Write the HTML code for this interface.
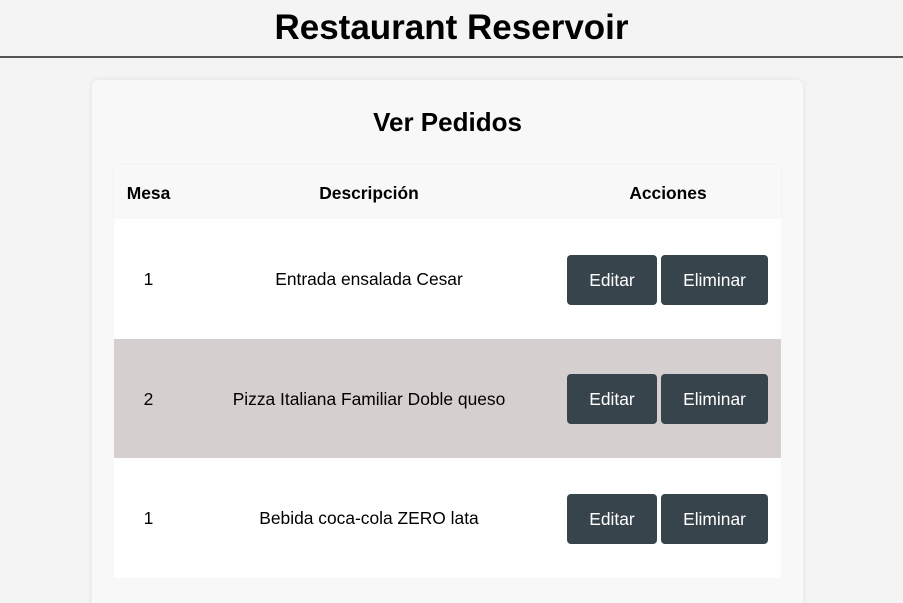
<!DOCTYPE html>
<html><head><meta charset="utf-8"><style>
*{box-sizing:border-box;margin:0;padding:0}
html,body{width:903px;height:603px;overflow:hidden;background:#f4f4f4;font-family:"Liberation Sans",Arial,sans-serif;color:#000}
body{position:relative}
.hdr{height:58px;border-bottom:2px solid #555;text-align:center;font-weight:bold;font-size:35px;line-height:56px}
.card{position:absolute;left:92px;top:80px;width:711px;height:530px;background:#f8f8f8;border-radius:6px;box-shadow:0 0 6px rgba(0,0,0,.08)}
h2{text-align:center;font-size:26px;font-weight:bold;position:absolute;top:27px;width:100%}
.t{position:absolute;left:22px;top:85px;width:667px}
.r{display:flex;align-items:center;font-size:17.4px}
.h{height:54px;background:#f8f8f8;font-weight:bold;box-shadow:0 0 3px rgba(0,0,0,.05);padding-top:3px}
.row{height:119.5px;background:#fff;padding-top:2px}
.row.g{background:#d6cfcf}
.c1{width:69px;text-align:center}
.c2{width:372px;text-align:center}
.c3{width:226px;text-align:center}
.btns{display:flex;gap:4px;padding-left:12px}
.b{background:#37444c;color:#fff;height:50px;line-height:50px;border-radius:4px;font-size:17.4px;text-align:center}
.e{width:90px}.d{width:107px}
</style></head><body>
<div class="hdr">Restaurant Reservoir</div>
<div class="card">
<h2>Ver Pedidos</h2>
<div class="t">
<div class="r h"><div class="c1">Mesa</div><div class="c2">Descripción</div><div class="c3">Acciones</div></div>
<div class="r row"><div class="c1">1</div><div class="c2">Entrada ensalada Cesar</div><div class="btns"><div class="b e">Editar</div><div class="b d">Eliminar</div></div></div>
<div class="r row g"><div class="c1">2</div><div class="c2">Pizza Italiana Familiar Doble queso</div><div class="btns"><div class="b e">Editar</div><div class="b d">Eliminar</div></div></div>
<div class="r row"><div class="c1">1</div><div class="c2">Bebida coca-cola ZERO lata</div><div class="btns"><div class="b e">Editar</div><div class="b d">Eliminar</div></div></div>
</div>
</div>
</body></html>
